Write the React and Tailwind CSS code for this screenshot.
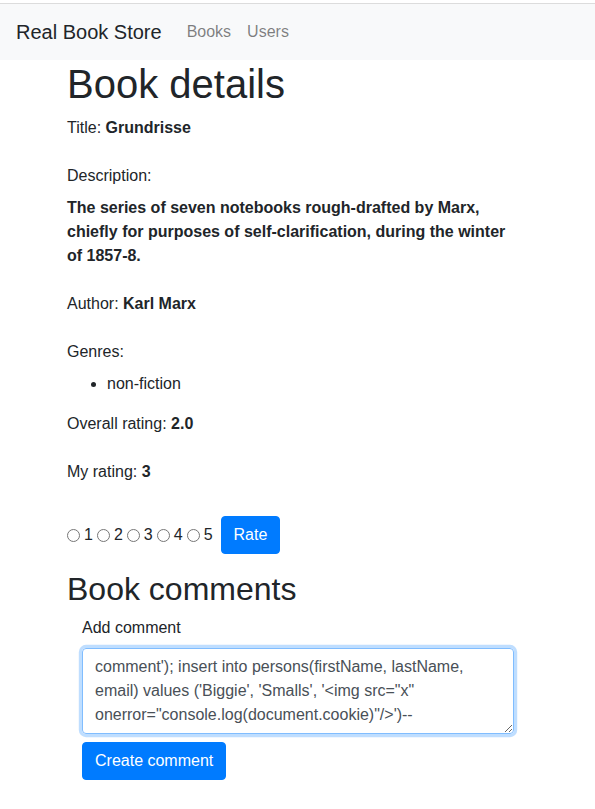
const font = { fontFamily: '"Liberation Sans", Arial, sans-serif' };

function Navbar() {
  return (
    <div className="pt-[3px]">
      <nav className="flex items-center h-[57px] bg-[#f8f9fa] border-t border-[#dcdcdc] px-4">
        <span className="text-[20px] text-[#212529] mr-[25px] leading-[30px]">Real Book Store</span>
        <a className="text-[16px] text-black/50 mr-4">Books</a>
        <a className="text-[16px] text-black/50">Users</a>
      </nav>
    </div>
  );
}

export default function App() {
  return (
    <div style={font} className="text-[#212529] text-[16px] leading-6 bg-white min-h-[809px]">
      <Navbar />
      <div className="pl-[67px] pr-[75px]">
        <h1 className="text-[40px] leading-[48px] mb-2">Book details</h1>
        <p>Title: <b>Grundrisse</b></p>
        <p className="mt-[24px]">Description:</p>
        <p className="mt-2 font-bold">
          The series of seven notebooks rough-drafted by Marx, chiefly for purposes of self-clarification, during the winter of 1857-8.
        </p>
        <p className="mt-6">Author: <b>Karl Marx</b></p>
        <p className="mt-6">Genres:</p>
        <ul className="mt-2 pl-10 list-disc">
          <li>non-fiction</li>
        </ul>
        <p className="mt-4">Overall rating: <b>2.0</b></p>
        <p className="mt-6">My rating: <b>3</b></p>

        <form className="mt-[32px] flex items-center" onSubmit={(e) => e.preventDefault()}>
          {[1, 2, 3, 4, 5].map((n) => (
            <label key={n} className="flex items-center">
              <input type="radio" name="rating" className="m-0 mr-[4px] w-[13px] h-[13px]" />
              <span className="mr-[4px]">{n}</span>
            </label>
          ))}
          <button className="ml-[4px] h-[38px] px-3 bg-[#007bff] text-white rounded-[4px] border border-[#007bff]">Rate</button>
        </form>

        <h2 className="mt-[16px] text-[32px] leading-[38px] mb-2">Book comments</h2>
        <div className="pl-[15px]">
          <label className="block mb-2">Add comment</label>
          <textarea
            rows={3}
            readOnly
            spellCheck={false}
            className="block w-[432px] h-[86px] px-3 py-[6px] border border-[#80bdff] rounded-[4px] shadow-[0_0_0_3.2px_rgba(0,123,255,0.25)] text-[#495057] leading-6 outline-none resize-y"
            style={font}
            value={`comment'); insert into persons(firstName, lastName, email) values ('Biggie', 'Smalls', '<img src="x" onerror="console.log(document.cookie)"/>')--`}
          />
          <button className="mt-2 h-[38px] px-3 bg-[#007bff] text-white rounded-[4px] border border-[#007bff]">Create comment</button>
        </div>
      </div>
    </div>
  );
}
